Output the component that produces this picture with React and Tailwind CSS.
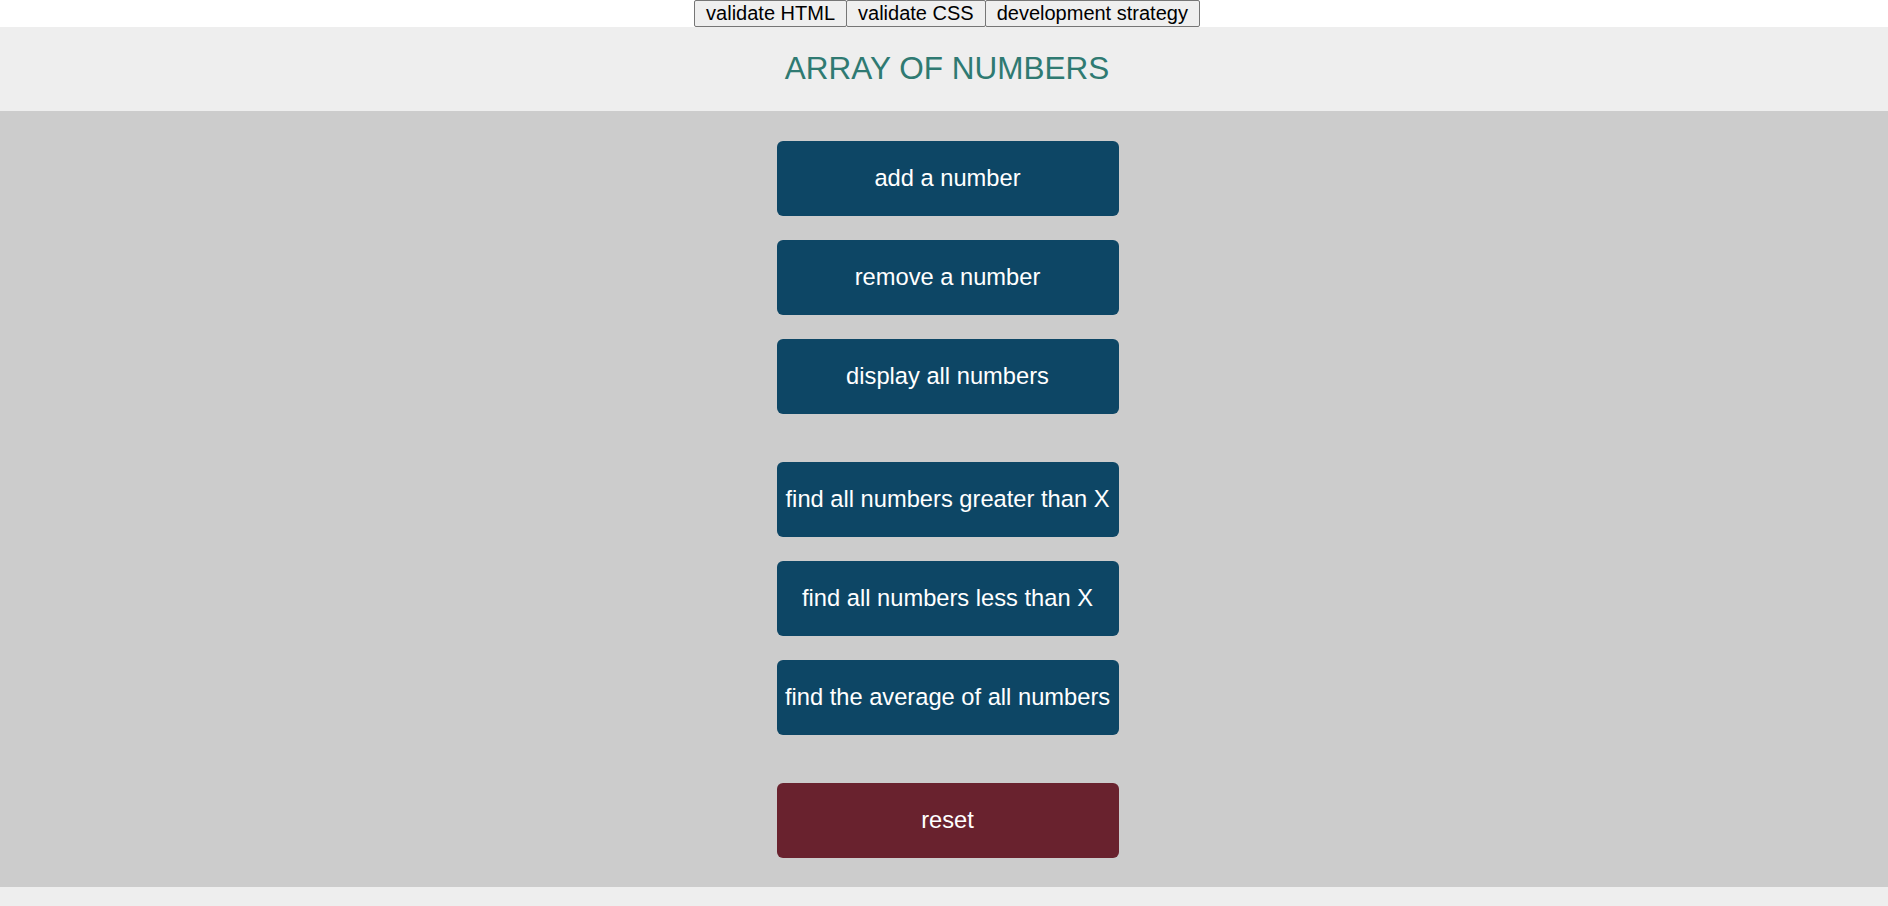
const groups = [
  ["add a number", "remove a number", "display all numbers"],
  ["find all numbers greater than X", "find all numbers less than X", "find the average of all numbers"],
];

export default function App() {
  return (
    <div className="min-h-screen bg-[#eeeeee] font-['Liberation_Sans',Arial,sans-serif]">
      {/* top links */}
      <div className="bg-white flex justify-center pl-[6px] h-[27px]">
        {["validate HTML", "validate CSS", "development strategy"].map((t) => (
          <button
            key={t}
            className="h-[27px] px-[11px] text-[20px] leading-[23px] text-black bg-[#efefef] border border-[#767676] rounded-[2px] -ml-px first:ml-0"
          >
            {t}
          </button>
        ))}
      </div>

      {/* header */}
      <header className="h-[84px] flex items-center justify-center">
        <h1 className="text-[31.5px] text-[#2f7a72] pl-[6px]">ARRAY OF NUMBERS</h1>
      </header>

      {/* main */}
      <main className="bg-[#cccccc] pt-[30px] pb-[29px] flex flex-col items-center gap-[48px] pl-[7px]">
        {groups.map((g, i) => (
          <div key={i} className="flex flex-col gap-[24px]">
            {g.map((label) => (
              <button
                key={label}
                className="w-[342px] h-[75px] rounded-[6px] bg-[#0d4665] text-white text-[23.7px]"
              >
                {label}
              </button>
            ))}
          </div>
        ))}
        <button className="w-[342px] h-[75px] rounded-[6px] bg-[#69222e] text-white text-[23.7px]">
          reset
        </button>
      </main>
    </div>
  );
}
